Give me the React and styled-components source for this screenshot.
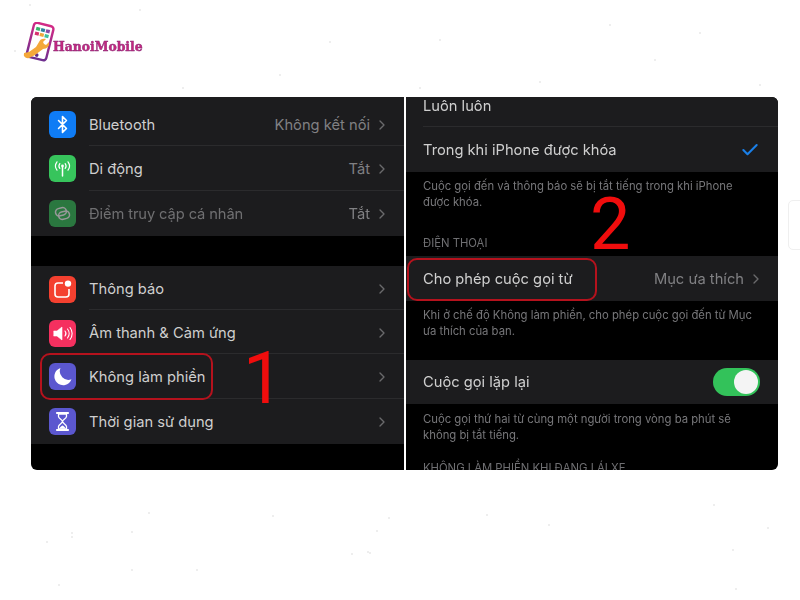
import React from "react";
import styled, { createGlobalStyle } from "styled-components";
import { Bluetooth, Check, ChevronRight } from "lucide-react";

const Global = createGlobalStyle`
  html, body {
    margin: 0;
    padding: 0;
    background: #fff;
  }
  body {
    font-family: Inter, "Liberation Sans", sans-serif;
  }
`;

const Page = styled.div`
  position: relative;
  width: 800px;
  height: 600px;
  overflow: hidden;
  background: #fff;
`;

const Speckles = styled.svg`
  position: absolute;
  left: 0;
  top: 0;
`;

const Header = styled.header`
  display: flex;
  align-items: flex-start;
  height: 97px;
  padding: 22px 0 0 23px;
  box-sizing: border-box;
`;

const Brand = styled.span`
  margin: 18px 0 0 -4px;
  font-family: "DejaVu Serif", serif;
  font-weight: 900;
  font-size: 12.4px;
  line-height: 14px;
  color: #c4277f;
  -webkit-text-stroke: 0.45px #8c2a78;
  filter: blur(0.3px);
`;

const Shot = styled.main`
  display: grid;
  grid-template-columns: 373px 372px;
  column-gap: 2px;
  width: 747px;
  height: 373px;
  margin-left: 31px;
  filter: blur(0.45px);
`;

const Panel = styled.section`
  position: relative;
  height: 373px;
  overflow: hidden;
  background: #000;
  border-radius: ${(p) => (p.$side === "left" ? "6px 0 0 6px" : "0 6px 6px 0")};
`;

const Group = styled.div`
  background: #1c1c1e;
  margin-bottom: ${(p) => p.$gap || 0}px;
`;

const Row = styled.div`
  display: flex;
  align-items: center;
  box-sizing: border-box;
  height: ${(p) => p.$h || 44}px;
  padding: ${(p) => (p.$plain ? "0 18px 0 17px" : "0 18px 0 18px")};
  padding-top: ${(p) => p.$drop || 0}px;
  padding-bottom: ${(p) => p.$lift || 0}px;
  position: relative;
  &::after {
    content: "";
    display: ${(p) => (p.$rule ? "block" : "none")};
    position: absolute;
    left: ${(p) => (p.$plain ? 17 : 58)}px;
    right: 0;
    bottom: 0;
    height: 1px;
    background: #2b2b2d;
  }
`;

const IconBox = styled.span`
  display: flex;
  align-items: center;
  justify-content: center;
  flex: none;
  width: 27px;
  height: 27px;
  margin-right: 13px;
  border-radius: 6px;
  background: ${(p) => p.$bg};
  color: #fff;
  opacity: ${(p) => p.$dim || 1};
`;

const Label = styled.span`
  flex: 1;
  font-size: 14.7px;
  white-space: nowrap;
  letter-spacing: ${(p) => (p.$dim ? "-0.1px" : "0")};
  color: ${(p) => (p.$dim ? "#6f6f71" : "#cfcfcf")};
`;

const Value = styled.span`
  font-size: 14.7px;
  white-space: nowrap;
  color: #808083;
`;

const Chevron = styled(ChevronRight)`
  flex: none;
  margin-left: 4px;
  margin-right: -4px;
  color: #6a6a6c;
`;

const Note = styled.p`
  margin: 0;
  padding: ${(p) => p.$pad};
  font-size: 11.3px;
  line-height: 16px;
  color: #77777a;
  white-space: pre-line;
`;

const Caption = styled.h4`
  margin: 0;
  padding: ${(p) => p.$pad};
  font-size: 11.3px;
  line-height: 16px;
  font-weight: 400;
  color: #6f6f72;
`;

const Toggle = styled.span`
  display: flex;
  justify-content: flex-end;
  align-items: center;
  box-sizing: border-box;
  width: 47px;
  height: 28px;
  padding: 2px;
  border-radius: 14px;
  background: #33c25a;
  &::after {
    content: "";
    width: 24px;
    height: 24px;
    border-radius: 50%;
    background: #f4f4f4;
  }
`;

const Outline = styled.div`
  position: absolute;
  box-sizing: border-box;
  left: ${(p) => p.$x}px;
  top: ${(p) => p.$y}px;
  width: ${(p) => p.$w}px;
  height: ${(p) => p.$h}px;
  border: 2px solid #b5121d;
  border-radius: 10px;
`;

const Digit = styled.span`
  position: absolute;
  left: ${(p) => p.$x}px;
  top: ${(p) => p.$y}px;
  font-family: Roboto, "Liberation Sans", sans-serif;
  font-weight: 400;
  font-size: 72px;
  line-height: 52px;
  color: #f00d0d;
`;

const SideCard = styled.div`
  position: absolute;
  left: 788px;
  top: 200px;
  width: 30px;
  height: 50px;
  box-sizing: border-box;
  border: 1px solid #efefef;
  border-radius: 5px;
`;

const specks = [
  [47, 542], [72, 533], [72, 537], [132, 532], [149, 513], [273, 516], [377, 531],
  [352, 554], [389, 518], [368, 552], [370, 553], [487, 515], [549, 525], [714, 505],
  [733, 550], [736, 589], [768, 528], [132, 570], [59, 585], [197, 570], [15, 51],
  [140, 10], [420, 88], [30, 5], [60, 110], [183, 88], [280, 75], [540, 82],
  [655, 60], [700, 33], [760, 85], [440, 40], [330, 42], [610, 25],
];

const Antenna = () => (
  <svg width="19" height="19" viewBox="0 0 19 19" fill="none" stroke="#fff" strokeLinecap="round">
    <path d="M9.5 8.500V17" strokeWidth="1.5" />
    <circle cx="9.5" cy="7" r="1.4" fill="#fff" stroke="none" />
    <path d="M6.800 4.600a4 4 0 0 0 0 4.800M12.200 4.600a4 4 0 0 1 0 4.800" strokeWidth="1.2" />
    <path d="M4 2.800a7 7 0 0 0 0 8.400M15 2.800a7 7 0 0 1 0 8.400" strokeWidth="1.2" />
  </svg>
);

const Hotspot = () => (
  <svg width="19" height="19" viewBox="0 0 19 19" fill="none" stroke="#fff" strokeWidth="1.5">
    <rect x="2.500" y="4" width="11" height="7.500" rx="3.700" transform="rotate(-15 8 8)" />
    <rect x="5.500" y="7.500" width="11" height="7.500" rx="3.700" transform="rotate(-15 11 11)" />
  </svg>
);

const Bell = () => (
  <svg width="21" height="21" viewBox="0 0 21 21" fill="none">
    <path d="M11 4H6a3 3 0 0 0-3 3v8a3 3 0 0 0 3 3h8a3 3 0 0 0 3-3v-5" stroke="#fff" strokeWidth="1.6" />
    <circle cx="16" cy="4.600" r="3.200" fill="#fff" />
  </svg>
);

const Speaker = () => (
  <svg width="21" height="21" viewBox="0 0 21 21" fill="none" stroke="#fff" strokeLinecap="round">
    <path d="M2 8h3l5-4v13l-5-4H2z" fill="#fff" strokeWidth="0.6" />
    <path d="M13 8a4 4 0 0 1 0 5" strokeWidth="1.1" />
    <path d="M15.500 6a7 7 0 0 1 0 9" strokeWidth="1.1" />
    <path d="M18 4.500a9.500 9.500 0 0 1 0 12" strokeWidth="1.1" />
  </svg>
);

const Moon = () => (
  <svg width="21" height="21" viewBox="0 0 21 21">
    <path d="M8.500 2a8.800 8.800 0 1 0 11 11.300A8.600 8.600 0 0 1 8.500 2z" fill="#fff" />
  </svg>
);

const Hourglass = () => (
  <svg width="19" height="21" viewBox="0 0 19 21" fill="none" stroke="#fff">
    <path d="M4 2h11M4 19h11" strokeWidth="2.2" strokeLinecap="round" />
    <path d="M5.500 3v2.500c0 2 4 3.500 4 5s-4 3-4 5V18h8v-2.500c0-2-4-3.500-4-5s4-3 4-5V3z" strokeWidth="1.3" />
    <path d="M6.500 17.500c0-1.500 3-3 3-3s3 1.500 3 3z" fill="#fff" stroke="none" />
  </svg>
);

const Logo = () => (
  <svg width="34" height="42" viewBox="0 0 34 42">
    <defs>
      <linearGradient id="rim" x1="0" y1="0" x2="0" y2="1">
        <stop offset="0" stopColor="#d22a86" />
        <stop offset="1" stopColor="#6f2f8f" />
      </linearGradient>
    </defs>
    <g transform="rotate(14 17 20)">
      <rect x="7" y="2" width="20" height="35" rx="3" fill="#fff" stroke="url(#rim)" strokeWidth="2.400" />
      <rect x="10" y="6" width="4" height="3.400" fill="#35b56a" />
      <rect x="15" y="6" width="4" height="3.400" fill="#2f7f9c" />
      <rect x="20" y="6" width="4" height="3.400" fill="#8a4aa5" />
      <rect x="10" y="11" width="4" height="3.400" fill="#d8326f" />
      <rect x="15" y="11" width="4" height="3.400" fill="#f0a63a" />
      <rect x="20" y="11" width="4" height="3.400" fill="#3fbf9a" />
      <circle cx="17" cy="33.500" r="1.800" fill="#5c2c86" />
    </g>
    <path d="M1 31l5-1 7-5 3-5c1-3 4-4 7-3l-3 3 1 2 2 1 3-3c1 4-2 7-6 7l-8 6-6 3c-3 1-6-2-5-4z" fill="#f4a83a" />
  </svg>
);

export default function App() {
  return (
    <Page>
      <Global />
      <Speckles width="800" height="600">
        {specks.map(([x, y], i) => (
          <circle key={i} cx={x} cy={y} r="0.7" fill="#cfcfcf" />
        ))}
      </Speckles>
      <SideCard />
      <Header>
        <Logo />
        <Brand>HanoiMobile</Brand>
      </Header>
      <Shot>
        <Panel $side="left">
          <Group $gap={30}>
            <Row $rule $h={49} $drop={6}>
              <IconBox $bg="#0f7cf5"><Bluetooth size={19} strokeWidth={2} /></IconBox>
              <Label>Bluetooth</Label>
              <Value>Không kết nối</Value>
              <Chevron size={16} />
            </Row>
            <Row $rule $h={45}>
              <IconBox $bg="#37c45c"><Antenna /></IconBox>
              <Label>Di động</Label>
              <Value>Tắt</Value>
              <Chevron size={16} />
            </Row>
            <Row $h={45}>
              <IconBox $bg="#37c45c" $dim={0.55}><Hotspot /></IconBox>
              <Label $dim>Điểm truy cập cá nhân</Label>
              <Value>Tắt</Value>
              <Chevron size={16} />
            </Row>
          </Group>
          <Group>
            <Row $rule $drop={2}>
              <IconBox $bg="#f4402f"><Bell /></IconBox>
              <Label>Thông báo</Label>
              <Chevron size={16} />
            </Row>
            <Row $rule $drop={2}>
              <IconBox $bg="#f5305f"><Speaker /></IconBox>
              <Label>Âm thanh &amp; Cảm ứng</Label>
              <Chevron size={16} />
            </Row>
            <Row $rule $h={45}>
              <IconBox $bg="#5b57cf"><Moon /></IconBox>
              <Label>Không làm phiền</Label>
              <Chevron size={16} />
            </Row>
            <Row $h={45}>
              <IconBox $bg="#5b57cf"><Hourglass /></IconBox>
              <Label>Thời gian sử dụng</Label>
              <Chevron size={16} />
            </Row>
          </Group>
          <Outline $x={9} $y={256} $w={173} $h={47} />
          <Digit $x={212} $y={256}>1</Digit>
        </Panel>
        <Panel $side="right">
          <Group>
            <Row $plain $rule $h={30} $lift={13}>
              <Label>Luôn luôn</Label>
            </Row>
            <Row $plain $h={45}>
              <Label>Trong khi iPhone được khóa</Label>
              <Check size={20} strokeWidth={2.5} color="#1a7fe8" />
            </Row>
          </Group>
          <Note $pad="6px 17px 0">
            {"Cuộc gọi đến và thông báo sẽ bị tắt tiếng trong khi iPhone\nđược khóa."}
          </Note>
          <Caption $pad="25px 17px 5px">ĐIỆN THOẠI</Caption>
          <Group>
            <Row $plain $h={45}>
              <Label>Cho phép cuộc gọi từ</Label>
              <Value>Mục ưa thích</Value>
              <Chevron size={16} />
            </Row>
          </Group>
          <Note $pad="6px 17px 21px">
            {"Khi ở chế độ Không làm phiền, cho phép cuộc gọi đến từ Mục\nưa thích của bạn."}
          </Note>
          <Group>
            <Row $plain>
              <Label>Cuộc gọi lặp lại</Label>
              <Toggle />
            </Row>
          </Group>
          <Note $pad="7px 17px 0">
            {"Cuộc gọi thứ hai từ cùng một người trong vòng ba phút sẽ\nkhông bị tắt tiếng."}
          </Note>
          <Caption $pad="17px 17px 0">KHÔNG LÀM PHIỀN KHI ĐANG LÁI XE</Caption>
          <Outline $x={1} $y={161} $w={190} $h={43} />
          <Digit $x={184} $y={102}>2</Digit>
        </Panel>
      </Shot>
    </Page>
  );
}
